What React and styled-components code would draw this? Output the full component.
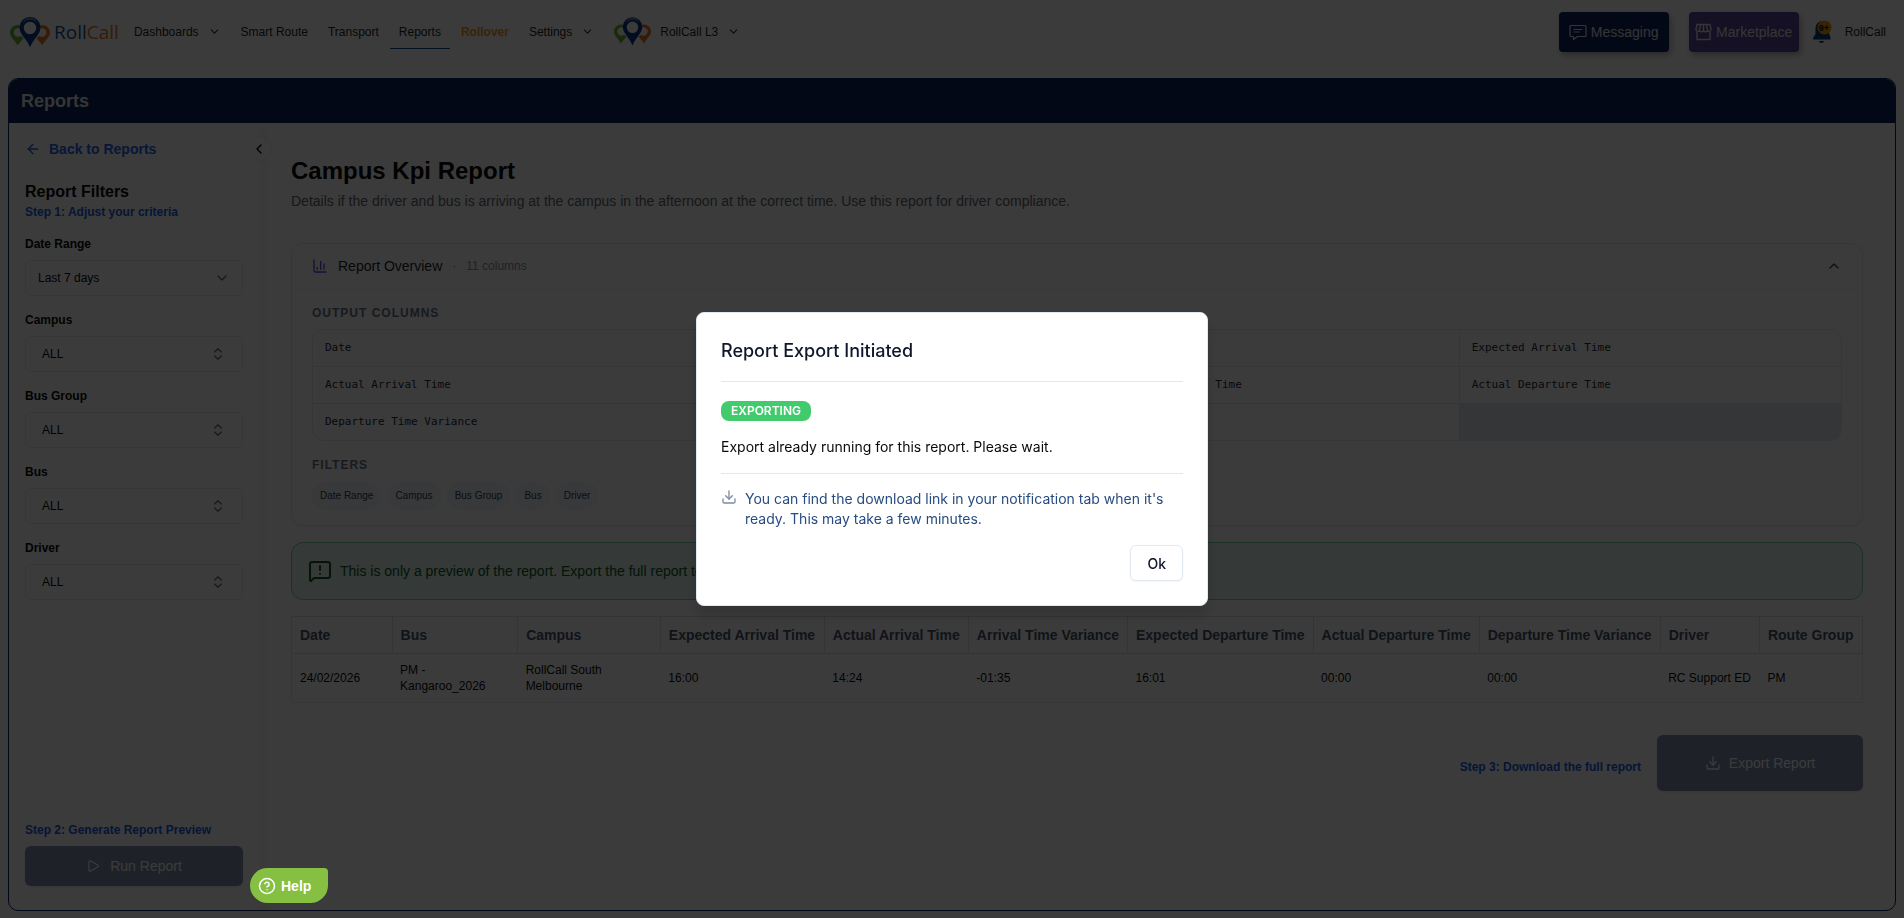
import React from 'react';
import styled, { createGlobalStyle } from 'styled-components';
import {
  ArrowLeft,
  ChartColumn,
  ChevronDown,
  ChevronLeft,
  ChevronsUpDown,
  ChevronUp,
  CircleHelp,
  Download,
  MessageSquareWarning,
  Play,
} from 'lucide-react';

const GlobalStyle = createGlobalStyle`
  * {
    box-sizing: border-box;
  }
  body {
    margin: 0;
    background: #ffffff;
    color: #0a0a0a;
    font-family: "Liberation Sans", Helvetica, Arial, sans-serif;
    font-size: 14px;
    line-height: 20px;
  }
  h1, h2, h3, p {
    margin: 0;
  }
  button, select {
    font-family: inherit;
  }
`;

const Page = styled.div`
  display: flex;
  flex-direction: column;
  min-height: 100vh;
`;

/* top navigation */
const TopBar = styled.header`
  display: flex;
  align-items: flex-start;
  justify-content: space-between;
  height: 78px;
  padding: 12px 18px 0 10px;
`;
const NavGroup = styled.nav`
  display: flex;
  align-items: center;
  height: 40px;
`;
const Logo = styled.a`
  display: flex;
  align-items: center;
  gap: 4px;
  margin-right: 5px;
  text-decoration: none;
`;
const LogoText = styled.span`
  color: #1d4f91;
  font-family: "Open Sans", "Noto Sans", sans-serif;
  font-size: 19px;
  line-height: 24px;
`;
const LogoAccent = styled.span`
  color: #e87722;
`;
const NavLink = styled.a`
  display: flex;
  align-items: center;
  gap: 9px;
  height: 34px;
  margin: 0 1px;
  padding: 0 9px;
  border-bottom: 1px solid ${props => (props.$active ? '#0a4a8f' : 'transparent')};
  color: ${props => (props.$accent ? '#f59a1c' : '#1f1f1f')};
  font-size: 12px;
  font-weight: ${props => (props.$accent ? 'bold' : 'normal')};
  text-decoration: none;
  svg {
    color: #0a3a7c;
  }
`;
const ActionGroup = styled.div`
  display: flex;
  align-items: center;
`;
const ActionButton = styled.button`
  display: flex;
  align-items: center;
  justify-content: center;
  gap: 4px;
  width: 110px;
  height: 40px;
  margin-right: ${props => (props.$last ? '14px' : '20px')};
  padding: 0;
  border: none;
  border-radius: 4px;
  background: ${props => props.$color};
  box-shadow: 2px 3px 6px rgba(0, 0, 0, 0.3);
  color: #e4e4e4;
  font-size: 14px;
`;
const BellButton = styled.button`
  display: flex;
  margin-right: 13px;
  padding: 0;
  border: none;
  background: none;
`;
const UserLink = styled.a`
  color: #1f1f1f;
  font-size: 12px;
  text-decoration: none;
`;

/* panel */
const Panel = styled.div`
  display: flex;
  flex: 1;
  flex-direction: column;
  margin: 0 8px 7px;
  border: 1px solid #09246a;
  border-radius: 10px;
  overflow: hidden;
`;
const PanelHeader = styled.div`
  padding: 11px 12px;
  background: #09235f;
  color: #e4e4e4;
  font-size: 18px;
  font-weight: bold;
  line-height: 22px;
`;
const PanelBody = styled.div`
  display: flex;
  flex: 1;
`;

/* sidebar */
const Sidebar = styled.aside`
  position: relative;
  display: flex;
  flex-direction: column;
  width: 250px;
  padding: 16px 16px 24px;
`;
const CollapseButton = styled.button`
  position: absolute;
  top: 14px;
  right: -12px;
  display: flex;
  align-items: center;
  justify-content: center;
  width: 24px;
  height: 24px;
  padding: 0;
  border: none;
  border-radius: 50%;
  background: #ffffff;
  box-shadow: 0 0 3px rgba(0, 0, 0, 0.1);
`;
const BackLink = styled.a`
  display: flex;
  align-items: center;
  gap: 8px;
  color: #2563eb;
  font-weight: bold;
  text-decoration: none;
`;
const FiltersTitle = styled.h2`
  margin-top: 21px;
  font-size: 16px;
  line-height: 24px;
`;
const StepText = styled.p`
  color: #1a5ce5;
  font-size: 12px;
  font-weight: bold;
  line-height: 16px;
`;
const FilterList = styled.div`
  display: flex;
  flex-direction: column;
  gap: 16px;
  margin-top: 16px;
`;
const FilterLabel = styled.label`
  display: block;
  margin-bottom: 8px;
  font-size: 12px;
  font-weight: bold;
  line-height: 16px;
`;
const SelectBox = styled.div`
  display: grid;
  align-items: center;
  svg {
    grid-area: 1 / 1;
    justify-self: end;
    margin-right: ${props => (props.$combo ? '17px' : '13px')};
    color: #6b7078;
    pointer-events: none;
  }
`;
const Select = styled.select`
  grid-area: 1 / 1;
  width: 100%;
  height: 36px;
  padding: 0 ${props => (props.$combo ? '16px' : '12px')};
  appearance: none;
  border: 1px solid #e4e7ec;
  border-radius: 6px;
  background: #ffffff;
  color: #0a0a0a;
  font-size: 12px;
`;
const SidebarFooter = styled.div`
  margin-top: auto;
`;
const PrimaryButton = styled.button`
  display: flex;
  align-items: center;
  justify-content: center;
  gap: ${props => (props.$large ? '8px' : '10px')};
  width: ${props => (props.$large ? '206px' : '100%')};
  height: ${props => (props.$large ? '56px' : '40px')};
  padding: 0;
  border: none;
  border-radius: 6px;
  background: #09235f;
  box-shadow: 0 1px 3px rgba(0, 0, 0, 0.2);
  color: #ffffff;
  font-size: 14px;
  &:disabled {
    opacity: 0.5;
  }
`;
const RunButton = styled(PrimaryButton)`
  margin-top: 8px;
`;
const Divider = styled.div`
  width: 9px;
  background: #f8f9fa;
`;

/* report */
const Main = styled.main`
  flex: 1;
  min-width: 0;
  padding: 32px 32px 24px 23px;
`;
const ReportTitle = styled.h1`
  font-size: 24px;
  line-height: 32px;
`;
const ReportInfo = styled.p`
  margin-top: 4px;
  color: #64676d;
`;
const Card = styled.section`
  margin-top: 32px;
  border: 1px solid #e2e8f0;
  border-radius: 12px;
  box-shadow: 0 1px 2px rgba(0, 0, 0, 0.05);
`;
const CardHeader = styled.button`
  display: flex;
  align-items: center;
  width: 100%;
  height: 45px;
  padding: 0 20px;
  border: none;
  border-bottom: 1px solid #f1f5f9;
  background: none;
  color: #64748b;
  font-size: 12px;
`;
const CardTitle = styled.span`
  margin: 0 10px;
  color: #1b1f2a;
  font-size: 14px;
`;
const ColumnCount = styled.span`
  margin-left: 10px;
  color: #8f939b;
`;
const CardChevron = styled(ChevronUp)`
  margin-left: auto;
  color: #334155;
`;
const CardBody = styled.div`
  padding: 16px 20px 15px;
`;
const Caption = styled.h3`
  color: #64748b;
  font-size: 12px;
  letter-spacing: 1px;
  line-height: 16px;
`;
const ColumnGrid = styled.div`
  display: grid;
  grid-template-columns: repeat(4, 1fr);
  gap: 1px;
  margin: 8px 0 16px;
  border: 1px solid #e2e8f0;
  border-radius: 12px;
  background: #e2e8f0;
  overflow: hidden;
`;
const ColumnName = styled.div`
  height: 36px;
  padding: 8px 12px;
  background: #ffffff;
  color: #1e293b;
  font-family: "DejaVu Sans Mono", monospace;
  font-size: 11px;
`;
const Chips = styled.div`
  display: flex;
  gap: 6px;
  margin-top: 9px;
`;
const Chip = styled.span`
  padding: 4px 8px;
  border-radius: 14px;
  background: #f3f5f9;
  color: #334155;
  font-size: 10px;
`;
const Alert = styled.div`
  display: flex;
  align-items: center;
  gap: 8px;
  height: 58px;
  margin: 16px 0;
  padding: 0 16px;
  border: 1px solid #7bd39a;
  border-radius: 12px;
  background: #e4f5ec;
  color: #0b5a22;
`;
const Table = styled.table`
  width: 100%;
  border: 1px solid #e2e8f0;
  border-collapse: collapse;
`;
const HeadCell = styled.th`
  height: 37px;
  padding: 0 8px;
  border: 1px solid #d9dee5;
  color: #475569;
  font-size: 14px;
  text-align: left;
  white-space: nowrap;
`;
const Cell = styled.td`
  height: 49px;
  padding: 8px;
  font-size: 12px;
  line-height: 16px;
`;
const ExportRow = styled.div`
  display: flex;
  align-items: center;
  justify-content: flex-end;
  gap: 16px;
  margin-top: 32px;
`;
const ExportStep = styled(StepText)`
  padding-top: 8px;
`;

/* dialog */
const Overlay = styled.div`
  position: fixed;
  inset: 0;
  z-index: 10;
  display: flex;
  align-items: center;
  justify-content: center;
  background: rgba(0, 0, 0, 0.77);
`;
const Dialog = styled.div`
  width: 512px;
  padding: 24px;
  border: 1px solid #e2e8f0;
  border-radius: 8px;
  background: #ffffff;
  box-shadow: 0 10px 15px rgba(0, 0, 0, 0.15);
  font-family: Inter, sans-serif;
`;
const DialogTitle = styled.h2`
  padding-bottom: 16px;
  border-bottom: 1px solid #e2e8f0;
  color: #0f172a;
  font-size: 18px;
  font-weight: 500;
  line-height: 28px;
`;
const DialogBody = styled.div`
  padding: 19px 0 16px;
  border-bottom: 1px solid #e2e8f0;
`;
const Badge = styled.span`
  display: block;
  width: fit-content;
  margin-bottom: 16px;
  padding: 2px 10px;
  border-radius: 8px;
  background: #41cb6d;
  color: #ffffff;
  font-size: 12px;
  font-weight: 600;
  line-height: 16px;
`;
const DialogNote = styled.div`
  display: flex;
  gap: 8px;
  padding: 15px 0 16px;
  color: #274c80;
  svg {
    flex-shrink: 0;
    color: #7c8ba1;
  }
`;
const DialogFooter = styled.div`
  display: flex;
  justify-content: flex-end;
`;
const OkButton = styled.button`
  height: 36px;
  padding: 0 16px;
  border: 1px solid #e2e8f0;
  border-radius: 6px;
  background: #ffffff;
  box-shadow: 0 1px 2px rgba(0, 0, 0, 0.05);
  color: #0f172a;
  font-size: 14px;
  font-weight: 500;
`;
const HelpButton = styled.button`
  position: fixed;
  bottom: 15px;
  left: 250px;
  z-index: 20;
  display: flex;
  align-items: center;
  gap: 5px;
  height: 35px;
  padding: 0 17px 0 8px;
  border: none;
  border-radius: 18px 4px 18px 18px;
  background: #86c043;
  color: #ffffff;
  font-size: 14px;
  font-weight: bold;
`;

const Pins = ({ width = 40, height = 31 }) => (
  <svg width={width} height={height} viewBox="0 0 40 31" aria-hidden="true">
    <path fill="#6ab42d" fillRule="evenodd" d="M7.500 8a7.500 7.500 0 0 1 4 1v4a4.300 4.300 0 1 0-1 6l3 2c-2 3-4 4.500-6 7.500C5 23 0 20.500 0 15.500A7.500 7.500 0 0 1 7.500 8z" />
    <path fill="#e87a1e" fillRule="evenodd" d="M32.500 8a7.500 7.500 0 0 0-4 1v4a4.300 4.300 0 1 1 1 6l-3 2c2 3 4 4.500 6 7.500 2.500-5.500 7.500-8 7.500-13A7.500 7.500 0 0 0 32.500 8z" />
    <path fill="#0a3a8a" fillRule="evenodd" d="M20 0a10.500 10.500 0 0 1 10.500 10.500C30.500 17.500 23 22 20 30.500 17 22 9.500 17.500 9.500 10.500A10.500 10.500 0 0 1 20 0zm0 4.800a6.200 6.200 0 1 0 0 12.400 6.200 6.200 0 0 0 0-12.400z" />
    <path fill="none" stroke="#9fb6d8" strokeWidth="0.600" d="M13 5.500a9 9 0 0 1 14 0M14 3.500a9.500 9.500 0 0 1 12 0" />
  </svg>
);

const MessageIcon = () => (
  <svg width="18" height="18" viewBox="0 0 18 18" fill="none" stroke="currentColor" strokeWidth="1.2" strokeLinejoin="round" aria-hidden="true">
    <path d="M2 2.500h14a1 1 0 0 1 1 1v9a1 1 0 0 1-1 1H8.500L4.500 16.500v-3H2a1 1 0 0 1-1-1v-9a1 1 0 0 1 1-1z" />
    <path d="M4.500 6.500h9M4.500 9h6" />
  </svg>
);

const StoreIcon = () => (
  <svg width="17" height="18" viewBox="0 0 17 18" fill="none" stroke="currentColor" strokeWidth="1.400" strokeLinejoin="round" aria-hidden="true">
    <path d="M2 1.500h13l1 5a2 2 0 0 1-3.500 1.200 2.300 2.300 0 0 1-4 0 2.300 2.300 0 0 1-4 0A2 2 0 0 1 1 6.500z" />
    <path d="M5.500 1.500l-1 6M8.500 1.500v6M11.500 1.500l1 6M2 9v7.500h13V9" />
  </svg>
);

const BellIcon = () => (
  <svg width="19" height="24" viewBox="0 0 19 24" aria-hidden="true">
    <path fill="#0a3a7c" d="M9 1a6.500 6.500 0 0 1 7 7v5l1.500 5v1.500H0V18l2.500-4V8A7 7 0 0 1 9 1zM6 21h5a2.500 2 0 0 1-5 0z" />
    <circle cx="11.500" cy="7.500" r="7" fill="#f2970f" />
    <text x="11" y="11" textAnchor="middle" fontSize="9" fontWeight="bold" fill="#10131a">9+</text>
  </svg>
);

const filters = ['Campus', 'Bus Group', 'Bus', 'Driver'];

const outputColumns = [
  'Date',
  'Bus',
  'Campus',
  'Expected Arrival Time',
  'Actual Arrival Time',
  'Arrival Time Variance',
  'Expected Departure Time',
  'Actual Departure Time',
  'Departure Time Variance',
  'Driver',
  'Route Group',
];

const columnWidths = [101, 126, 144, 164, 144, 159, 185, 166, 181, 100, 103];

const rows = [
  ['24/02/2026', 'PM - Kangaroo_2026', 'RollCall South Melbourne', '16:00', '14:24', '-01:35', '16:01', '00:00', '00:00', 'RC Support ED', 'PM'],
];

const Header = () => (
  <TopBar>
    <NavGroup>
      <Logo href="#home">
        <Pins />
        <LogoText>Roll<LogoAccent>Call</LogoAccent></LogoText>
      </Logo>
      <NavLink href="#dashboards">Dashboards <ChevronDown size={13} /></NavLink>
      <NavLink href="#smart-route">Smart Route</NavLink>
      <NavLink href="#transport">Transport</NavLink>
      <NavLink href="#reports" $active>Reports</NavLink>
      <NavLink href="#rollover" $accent>Rollover</NavLink>
      <NavLink href="#settings">Settings <ChevronDown size={13} /></NavLink>
      <NavLink href="#campus"><Pins width={37} height={29} /> RollCall L3 <ChevronDown size={13} /></NavLink>
    </NavGroup>
    <ActionGroup>
      <ActionButton $color="#09235f"><MessageIcon /> Messaging</ActionButton>
      <ActionButton $color="#5b4899" $last><StoreIcon /> Marketplace</ActionButton>
      <BellButton aria-label="Notifications"><BellIcon /></BellButton>
      <UserLink href="#account">RollCall</UserLink>
    </ActionGroup>
  </TopBar>
);

const FilterSidebar = () => (
  <Sidebar>
    <CollapseButton aria-label="Collapse filters"><ChevronLeft size={16} /></CollapseButton>
    <BackLink href="#reports"><ArrowLeft size={16} /> Back to Reports</BackLink>
    <FiltersTitle>Report Filters</FiltersTitle>
    <StepText>Step 1: Adjust your criteria</StepText>
    <FilterList>
      <div>
        <FilterLabel htmlFor="date-range">Date Range</FilterLabel>
        <SelectBox>
          <Select id="date-range"><option>Last 7 days</option></Select>
          <ChevronDown size={16} />
        </SelectBox>
      </div>
      {filters.map(name => (
        <div key={name}>
          <FilterLabel htmlFor={name}>{name}</FilterLabel>
          <SelectBox $combo>
            <Select id={name} $combo><option>ALL</option></Select>
            <ChevronsUpDown size={16} />
          </SelectBox>
        </div>
      ))}
    </FilterList>
    <SidebarFooter>
      <StepText>Step 2: Generate Report Preview</StepText>
      <RunButton disabled><Play size={14} /> Run Report</RunButton>
    </SidebarFooter>
  </Sidebar>
);

const Overview = () => (
  <Card>
    <CardHeader aria-expanded="true">
      <ChartColumn size={16} color="#5b4bd6" />
      <CardTitle>Report Overview</CardTitle>
      ·
      <ColumnCount>11 columns</ColumnCount>
      <CardChevron size={16} />
    </CardHeader>
    <CardBody>
      <Caption>OUTPUT COLUMNS</Caption>
      <ColumnGrid>
        {outputColumns.map(name => <ColumnName key={name}>{name}</ColumnName>)}
      </ColumnGrid>
      <Caption>FILTERS</Caption>
      <Chips>
        {['Date Range', ...filters].map(name => <Chip key={name}>{name}</Chip>)}
      </Chips>
    </CardBody>
  </Card>
);

const PreviewTable = () => (
  <Table>
    <colgroup>
      {columnWidths.map((width, i) => <col key={i} width={width} />)}
    </colgroup>
    <thead>
      <tr>{outputColumns.map(name => <HeadCell key={name}>{name}</HeadCell>)}</tr>
    </thead>
    <tbody>
      {rows.map((row, i) => (
        <tr key={i}>{row.map((value, j) => <Cell key={j}>{value}</Cell>)}</tr>
      ))}
    </tbody>
  </Table>
);

const ExportDialog = () => (
  <Overlay>
    <Dialog role="dialog" aria-modal="true" aria-labelledby="export-title">
      <DialogTitle id="export-title">Report Export Initiated</DialogTitle>
      <DialogBody>
        <Badge>EXPORTING</Badge>
        <p>Export already running for this report. Please wait.</p>
      </DialogBody>
      <DialogNote>
        <Download size={16} />
        <p>You can find the download link in your notification tab when it's ready. This may take a few minutes.</p>
      </DialogNote>
      <DialogFooter>
        <OkButton>Ok</OkButton>
      </DialogFooter>
    </Dialog>
  </Overlay>
);

const App = () => (
  <>
    <GlobalStyle />
    <Page>
      <Header />
      <Panel>
        <PanelHeader>Reports</PanelHeader>
        <PanelBody>
          <FilterSidebar />
          <Divider />
          <Main>
            <ReportTitle>Campus Kpi Report</ReportTitle>
            <ReportInfo>
              Details if the driver and bus is arriving at the campus in the afternoon at the correct time. Use this report for driver compliance.
            </ReportInfo>
            <Overview />
            <Alert>
              <MessageSquareWarning size={24} />
              This is only a preview of the report. Export the full report to see all data.
            </Alert>
            <PreviewTable />
            <ExportRow>
              <ExportStep>Step 3: Download the full report</ExportStep>
              <PrimaryButton $large disabled><Download size={16} /> Export Report</PrimaryButton>
            </ExportRow>
          </Main>
        </PanelBody>
      </Panel>
    </Page>
    <ExportDialog />
    <HelpButton><CircleHelp size={18} /> Help</HelpButton>
  </>
);

export default App;
